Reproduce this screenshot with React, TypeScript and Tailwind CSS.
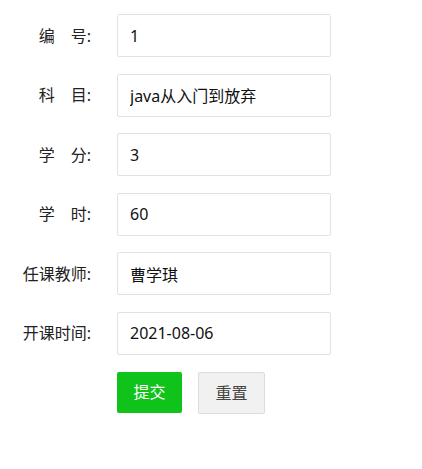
const fields = [
  { label: "编\u3000号:", value: "1" },
  { label: "科\u3000目:", value: "java从入门到放弃" },
  { label: "学\u3000分:", value: "3" },
  { label: "学\u3000时:", value: "60" },
  { label: "任课教师:", value: "曹学琪" },
  { label: "开课时间:", value: "2021-08-06" },
];

const font = {
  fontFamily: '"Noto Sans", "Noto Sans CJK SC", sans-serif',
};

export default function App() {
  return (
    <div className="w-[422px] h-[469px] bg-white pt-[14px]" style={font}>
      <div className="flex flex-col gap-[16.6px]">
        {fields.map((f) => (
          <div key={f.label} className="flex items-center">
            <label className="w-[92px] text-right text-[16px] text-[#222] pr-[1px]">
              {f.label}
            </label>
            <input
              readOnly
              defaultValue={f.value}
              className="ml-[25px] w-[214px] h-[43px] border border-[#e2e2e2] rounded-[2px] px-[12px] text-[16px] text-[#111] outline-none"
            />
          </div>
        ))}
        <div className="flex pl-[117px] gap-[16px]">
          <button className="w-[65px] h-[41px] rounded-[2px] bg-[#0fc31a] text-white text-[16px]">
            提交
          </button>
          <button className="w-[67px] h-[42px] rounded-[2px] bg-[#f1f1f1] border border-[#dcdcdc] text-[#444] text-[16px]">
            重置
          </button>
        </div>
      </div>
    </div>
  );
}
